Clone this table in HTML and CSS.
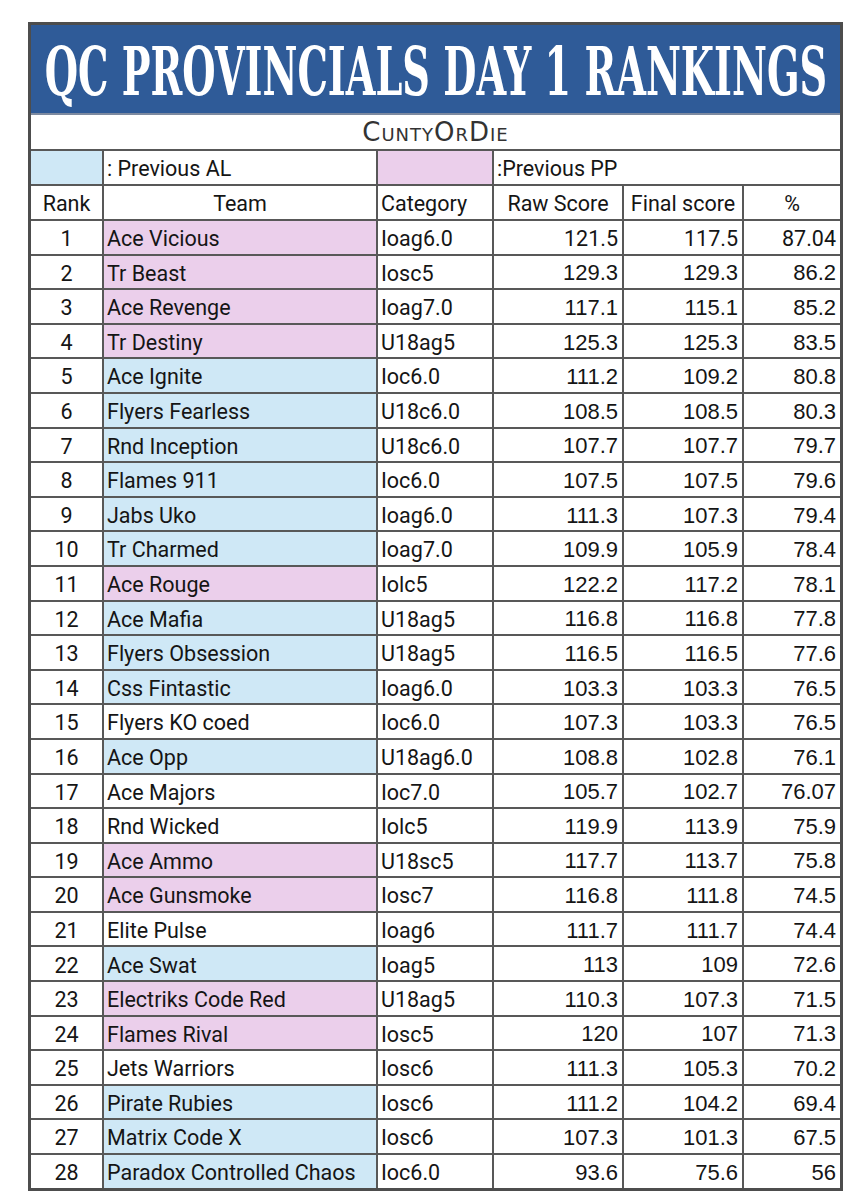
FILE: index.html
```html
<!DOCTYPE html>
<html lang="en">
<head>
<meta charset="utf-8">
<title>QC Provincials Day 1 Rankings</title>
<link rel="stylesheet" href="styles.css">
</head>
<body>
<div class="sheet">
  <div class="title"><span class="title-text">QC PROVINCIALS DAY 1 RANKINGS</span></div>
  <div class="grid">
    <div class="c subtitle">CuntyOrDie</div>

    <div class="c al"></div>
    <div class="c left">: Previous AL</div>
    <div class="c pp"></div>
    <div class="c left span3">:Previous PP</div>

    <div class="c center">Rank</div>
    <div class="c center">Team</div>
    <div class="c left">Category</div>
    <div class="c center">Raw Score</div>
    <div class="c center">Final score</div>
    <div class="c center">%</div>

    <div class="c center">1</div><div class="c left pp">Ace Vicious</div><div class="c left">Ioag6.0</div><div class="c num alt">121.5</div><div class="c num alt">117.5</div><div class="c num alt">87.04</div>
    <div class="c center">2</div><div class="c left pp">Tr Beast</div><div class="c left">Iosc5</div><div class="c num">129.3</div><div class="c num">129.3</div><div class="c num">86.2</div>
    <div class="c center">3</div><div class="c left pp">Ace Revenge</div><div class="c left">Ioag7.0</div><div class="c num">117.1</div><div class="c num">115.1</div><div class="c num">85.2</div>
    <div class="c center">4</div><div class="c left pp">Tr Destiny</div><div class="c left">U18ag5</div><div class="c num">125.3</div><div class="c num">125.3</div><div class="c num">83.5</div>
    <div class="c center">5</div><div class="c left al">Ace Ignite</div><div class="c left">Ioc6.0</div><div class="c num">111.2</div><div class="c num">109.2</div><div class="c num">80.8</div>
    <div class="c center">6</div><div class="c left al">Flyers Fearless</div><div class="c left">U18c6.0</div><div class="c num">108.5</div><div class="c num">108.5</div><div class="c num">80.3</div>
    <div class="c center">7</div><div class="c left al">Rnd Inception</div><div class="c left">U18c6.0</div><div class="c num">107.7</div><div class="c num">107.7</div><div class="c num">79.7</div>
    <div class="c center">8</div><div class="c left al">Flames 911</div><div class="c left">Ioc6.0</div><div class="c num">107.5</div><div class="c num">107.5</div><div class="c num">79.6</div>
    <div class="c center">9</div><div class="c left al">Jabs Uko</div><div class="c left">Ioag6.0</div><div class="c num">111.3</div><div class="c num">107.3</div><div class="c num">79.4</div>
    <div class="c center">10</div><div class="c left al">Tr Charmed</div><div class="c left">Ioag7.0</div><div class="c num">109.9</div><div class="c num">105.9</div><div class="c num">78.4</div>
    <div class="c center">11</div><div class="c left pp">Ace Rouge</div><div class="c left">Iolc5</div><div class="c num">122.2</div><div class="c num">117.2</div><div class="c num">78.1</div>
    <div class="c center">12</div><div class="c left al">Ace Mafia</div><div class="c left">U18ag5</div><div class="c num">116.8</div><div class="c num">116.8</div><div class="c num">77.8</div>
    <div class="c center">13</div><div class="c left al">Flyers Obsession</div><div class="c left">U18ag5</div><div class="c num">116.5</div><div class="c num">116.5</div><div class="c num">77.6</div>
    <div class="c center">14</div><div class="c left al">Css Fintastic</div><div class="c left">Ioag6.0</div><div class="c num">103.3</div><div class="c num">103.3</div><div class="c num">76.5</div>
    <div class="c center">15</div><div class="c left">Flyers KO coed</div><div class="c left">Ioc6.0</div><div class="c num">107.3</div><div class="c num">103.3</div><div class="c num">76.5</div>
    <div class="c center">16</div><div class="c left al">Ace Opp</div><div class="c left">U18ag6.0</div><div class="c num">108.8</div><div class="c num">102.8</div><div class="c num">76.1</div>
    <div class="c center">17</div><div class="c left">Ace Majors</div><div class="c left">Ioc7.0</div><div class="c num">105.7</div><div class="c num">102.7</div><div class="c num">76.07</div>
    <div class="c center">18</div><div class="c left">Rnd Wicked</div><div class="c left">Iolc5</div><div class="c num">119.9</div><div class="c num">113.9</div><div class="c num">75.9</div>
    <div class="c center">19</div><div class="c left pp">Ace Ammo</div><div class="c left">U18sc5</div><div class="c num">117.7</div><div class="c num">113.7</div><div class="c num">75.8</div>
    <div class="c center">20</div><div class="c left pp">Ace Gunsmoke</div><div class="c left">Iosc7</div><div class="c num">116.8</div><div class="c num">111.8</div><div class="c num">74.5</div>
    <div class="c center">21</div><div class="c left">Elite Pulse</div><div class="c left">Ioag6</div><div class="c num">111.7</div><div class="c num">111.7</div><div class="c num">74.4</div>
    <div class="c center">22</div><div class="c left al">Ace Swat</div><div class="c left">Ioag5</div><div class="c num">113</div><div class="c num">109</div><div class="c num">72.6</div>
    <div class="c center">23</div><div class="c left pp">Electriks Code Red</div><div class="c left">U18ag5</div><div class="c num">110.3</div><div class="c num">107.3</div><div class="c num">71.5</div>
    <div class="c center">24</div><div class="c left pp">Flames Rival</div><div class="c left">Iosc5</div><div class="c num">120</div><div class="c num">107</div><div class="c num">71.3</div>
    <div class="c center">25</div><div class="c left">Jets Warriors</div><div class="c left">Iosc6</div><div class="c num">111.3</div><div class="c num">105.3</div><div class="c num">70.2</div>
    <div class="c center">26</div><div class="c left al">Pirate Rubies</div><div class="c left">Iosc6</div><div class="c num">111.2</div><div class="c num">104.2</div><div class="c num">69.4</div>
    <div class="c center">27</div><div class="c left al">Matrix Code X</div><div class="c left">Iosc6</div><div class="c num">107.3</div><div class="c num">101.3</div><div class="c num">67.5</div>
    <div class="c center">28</div><div class="c left al">Paradox Controlled Chaos</div><div class="c left">Ioc6.0</div><div class="c num">93.6</div><div class="c num">75.6</div><div class="c num">56</div>
  </div>
</div>
</body>
</html>
```

FILE: styles.css
```css
html, body {
  margin: 0;
  padding: 0;
  background: #ffffff;
}

body {
  padding: 22px 0 0 28px;
  font-family: Roboto, "Noto Sans", sans-serif;
  color: #151515;
}

.sheet {
  width: 809px;
  border: 3px solid #4d4d4d;
  background: #fff;
}

.title {
  height: 88px;
  background: #2f5b98;
  border-bottom: 2px solid #7d8aa0;
  display: flex;
  align-items: center;
  justify-content: center;
  overflow: hidden;
}

.title-text {
  display: inline-block;
  white-space: nowrap;
  font-family: "DejaVu Serif Condensed", "DejaVu Serif", serif;
  font-weight: bold;
  font-size: 68px;
  line-height: 1;
  color: #ffffff;
  transform: scaleX(0.625);
  transform-origin: center;
  padding-top: 4px;
}

.grid {
  display: grid;
  grid-template-columns: 71px 272px 114px 128px 118px 96px;
  grid-template-rows: 34px 33px 33px repeat(28, 32.6px);
  gap: 2px;
  background: #585858;
}

.c {
  background: #ffffff;
  display: flex;
  align-items: center;
  font-size: 21.5px;
  line-height: 1;
  padding: 3px 3px 0 3px;
  white-space: nowrap;
  overflow: hidden;
}

.left { justify-content: flex-start; }
.center { justify-content: center; padding-left: 0; padding-right: 0; }

.num {
  justify-content: flex-end;
  font-family: "Liberation Sans", Arial, sans-serif;
  font-size: 22px;
  padding-right: 4px;
}

.num.alt {
  font-family: Roboto, "Noto Sans", sans-serif;
  font-size: 21.5px;
}

.subtitle {
  grid-column: 1 / -1;
  justify-content: center;
  font-family: "DejaVu Sans", sans-serif;
  font-variant: small-caps;
  font-weight: normal;
  font-size: 26px;
  letter-spacing: 1px;
  color: #333333;
  padding: 0;
}

.span3 { grid-column: span 3; }

.al { background: #cfe8f6; }
.pp { background: #ebcfeb; }
```
